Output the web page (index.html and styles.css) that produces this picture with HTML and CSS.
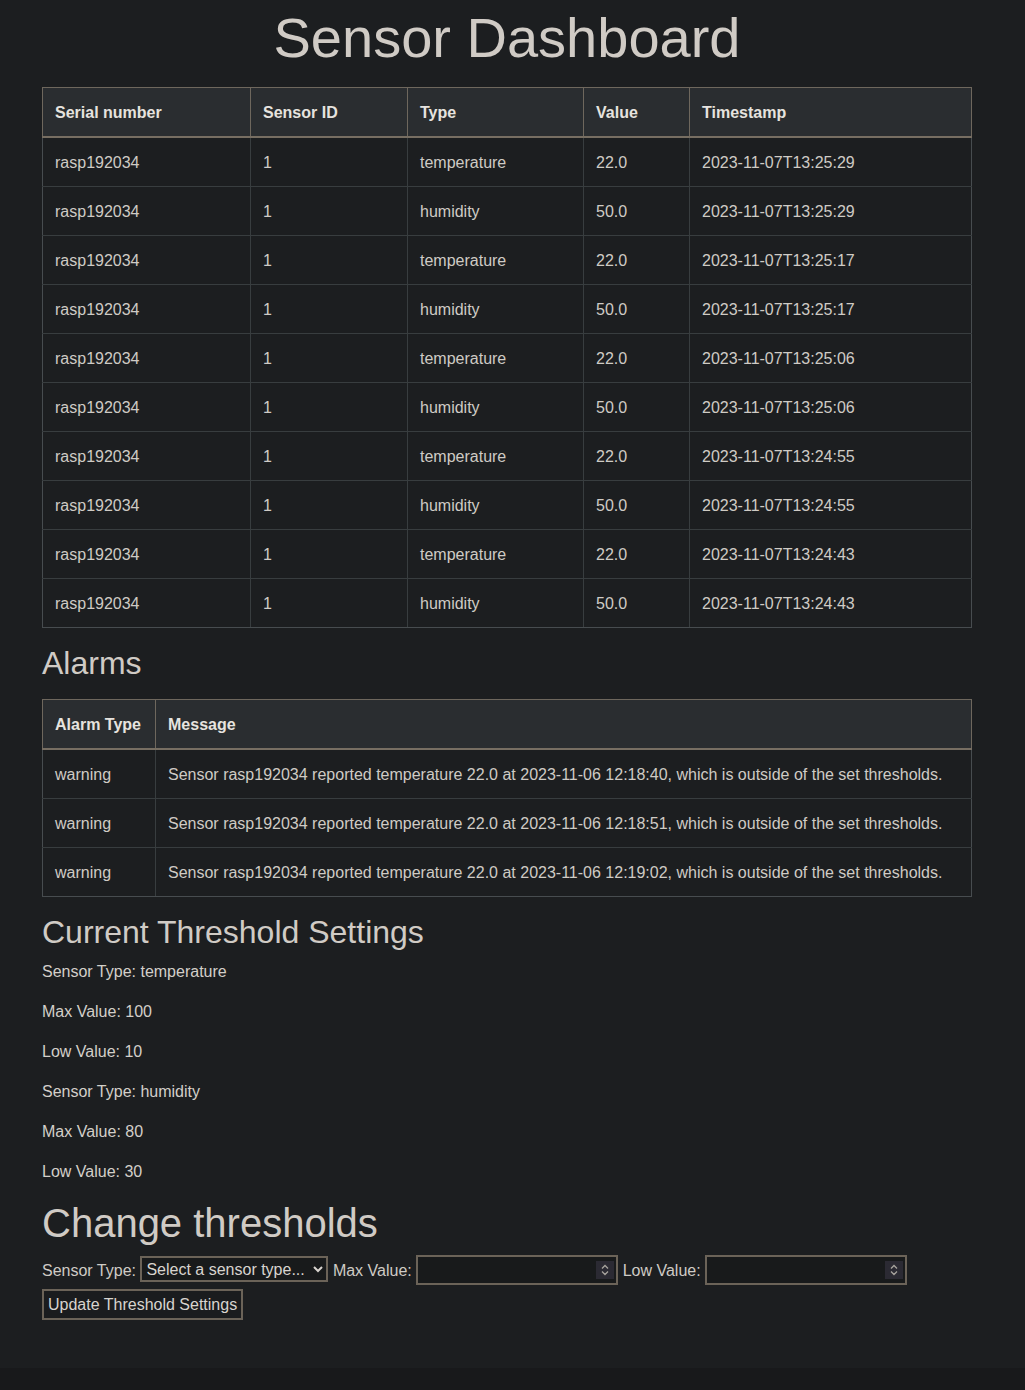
FILE: index.html
```html
<!DOCTYPE html>
<html lang="en">
<head>
<meta charset="utf-8">
<title>Sensor Dashboard</title>
<link rel="stylesheet" href="styles.css">
</head>
<body>
<div class="container">
  <h1 class="title">Sensor Dashboard</h1>

  <table class="data">
    <colgroup>
      <col class="c-serial"><col class="c-id"><col class="c-type"><col class="c-value"><col class="c-ts">
    </colgroup>
    <thead>
      <tr><th>Serial number</th><th>Sensor ID</th><th>Type</th><th>Value</th><th>Timestamp</th></tr>
    </thead>
    <tbody>
      <tr><td>rasp192034</td><td>1</td><td>temperature</td><td>22.0</td><td>2023-11-07T13:25:29</td></tr>
      <tr><td>rasp192034</td><td>1</td><td>humidity</td><td>50.0</td><td>2023-11-07T13:25:29</td></tr>
      <tr><td>rasp192034</td><td>1</td><td>temperature</td><td>22.0</td><td>2023-11-07T13:25:17</td></tr>
      <tr><td>rasp192034</td><td>1</td><td>humidity</td><td>50.0</td><td>2023-11-07T13:25:17</td></tr>
      <tr><td>rasp192034</td><td>1</td><td>temperature</td><td>22.0</td><td>2023-11-07T13:25:06</td></tr>
      <tr><td>rasp192034</td><td>1</td><td>humidity</td><td>50.0</td><td>2023-11-07T13:25:06</td></tr>
      <tr><td>rasp192034</td><td>1</td><td>temperature</td><td>22.0</td><td>2023-11-07T13:24:55</td></tr>
      <tr><td>rasp192034</td><td>1</td><td>humidity</td><td>50.0</td><td>2023-11-07T13:24:55</td></tr>
      <tr><td>rasp192034</td><td>1</td><td>temperature</td><td>22.0</td><td>2023-11-07T13:24:43</td></tr>
      <tr><td>rasp192034</td><td>1</td><td>humidity</td><td>50.0</td><td>2023-11-07T13:24:43</td></tr>
    </tbody>
  </table>

  <h2 class="section alarms-title">Alarms</h2>
  <table class="data">
    <colgroup><col class="c-alarm"><col></colgroup>
    <thead>
      <tr><th>Alarm Type</th><th>Message</th></tr>
    </thead>
    <tbody>
      <tr><td>warning</td><td>Sensor rasp192034 reported temperature 22.0 at 2023-11-06 12:18:40, which is outside of the set thresholds.</td></tr>
      <tr><td>warning</td><td>Sensor rasp192034 reported temperature 22.0 at 2023-11-06 12:18:51, which is outside of the set thresholds.</td></tr>
      <tr><td>warning</td><td>Sensor rasp192034 reported temperature 22.0 at 2023-11-06 12:19:02, which is outside of the set thresholds.</td></tr>
    </tbody>
  </table>

  <h2 class="section settings-title">Current Threshold Settings</h2>
  <p>Sensor Type: temperature</p>
  <p>Max Value: 100</p>
  <p>Low Value: 10</p>
  <p>Sensor Type: humidity</p>
  <p>Max Value: 80</p>
  <p class="last">Low Value: 30</p>

  <h1 class="form-title">Change thresholds</h1>
  <form class="thresholds">
    <label for="stype">Sensor Type:</label>
    <select id="stype" class="sel">
      <option>Select a sensor type...</option>
      <option>temperature</option>
      <option>humidity</option>
    </select>
    <label for="maxv">Max Value:</label>
    <span class="numfield"><input id="maxv" class="num" type="text"><span class="spin"><svg width="18" height="18" viewBox="0 0 18 18"><path d="M6 7.5 L9 4.5 L12 7.5 M6 10.5 L9 13.5 L12 10.5" fill="none" stroke="#a7a39d" stroke-width="1.3"/></svg></span></span>
    <label for="lowv">Low Value:</label>
    <span class="numfield"><input id="lowv" class="num" type="text"><span class="spin"><svg width="18" height="18" viewBox="0 0 18 18"><path d="M6 7.5 L9 4.5 L12 7.5 M6 10.5 L9 13.5 L12 10.5" fill="none" stroke="#a7a39d" stroke-width="1.3"/></svg></span></span>
    <button type="button" class="btn">Update Threshold Settings</button>
  </form>
</div>
</body>
</html>
```

FILE: styles.css
```css
html {
  background: #18191b;
}

body {
  margin: 0;
  background: #1c1e20;
  color: #d3cfc9;
  font-family: "Liberation Sans", Arial, sans-serif;
  font-size: 16px;
  line-height: 1.5;
}

.container {
  width: 930px;
  margin-left: 42px;
  padding: 4px 0 32px;
}

.title {
  margin: 0 0 16px;
  font-size: 56px;
  font-weight: 400;
  line-height: 1.2;
  text-align: center;
  color: #d0cbc5;
}

.data {
  width: 100%;
  border-collapse: collapse;
  table-layout: fixed;
  margin-bottom: 16px;
}

.c-serial { width: 208px; }
.c-id { width: 157px; }
.c-type { width: 176px; }
.c-value { width: 106px; }
.c-alarm { width: 113px; }

.data th,
.data td {
  padding: 13px 12px 11px;
  text-align: left;
  vertical-align: top;
}

.data th {
  background: #2a2d30;
  color: #e6e3df;
  font-weight: 700;
  border: 1px solid #6e675d;
  border-bottom: 2px solid #776e62;
}

.data td {
  border: 1px solid #383d3f;
  color: #cfcbc5;
  white-space: nowrap;
}

.data td:first-child { border-left-color: #474c4f; }
.data td:last-child { border-right-color: #474c4f; }
.data tbody tr:last-child td { border-bottom-color: #474c4f; }

.section {
  margin: 0 0 8px;
  font-size: 32px;
  font-weight: 400;
  line-height: 1.2;
  color: #d0cbc5;
}

.alarms-title {
  margin-bottom: 16px;
}

.settings-title {
  margin-bottom: 9px;
}

p {
  margin: 0 0 16px;
}

p.last {
  margin-bottom: 15px;
}

.form-title {
  margin: 0 0 8px;
  font-size: 40px;
  font-weight: 400;
  line-height: 1.2;
  color: #d0cbc5;
}

.thresholds {
  margin: 0 0 16px;
}

.thresholds label {
  color: #cfcbc5;
  vertical-align: -1px;
}

.sel {
  width: 188px;
  height: 26px;
  font-family: inherit;
  font-size: 16px;
  color: #d8d4cf;
  background-color: #181a1b;
  border: 2px solid #6b6358;
  border-radius: 0;
  padding: 0;
}

.numfield {
  display: inline-flex;
  align-items: center;
  box-sizing: border-box;
  width: 202px;
  height: 30px;
  border: 2px solid #6b6358;
  background: #181a1b;
}

.num {
  flex: 1;
  min-width: 0;
  height: 24px;
  border: 0;
  background: transparent;
  color: #d8d4cf;
  font: inherit;
  outline: none;
  padding: 0 4px;
}

.spin {
  display: flex;
  width: 18px;
  height: 18px;
  margin-right: 2px;
  background: #2b2a33;
}

.btn {
  margin-top: 4px;
  font-family: inherit;
  font-size: 16px;
  line-height: 24px;
  color: #d8d4cf;
  background: #1a1c1e;
  border: 2px solid #6b6358;
  border-radius: 0;
  padding: 2px 4px 1px;
  vertical-align: top;
}
```
